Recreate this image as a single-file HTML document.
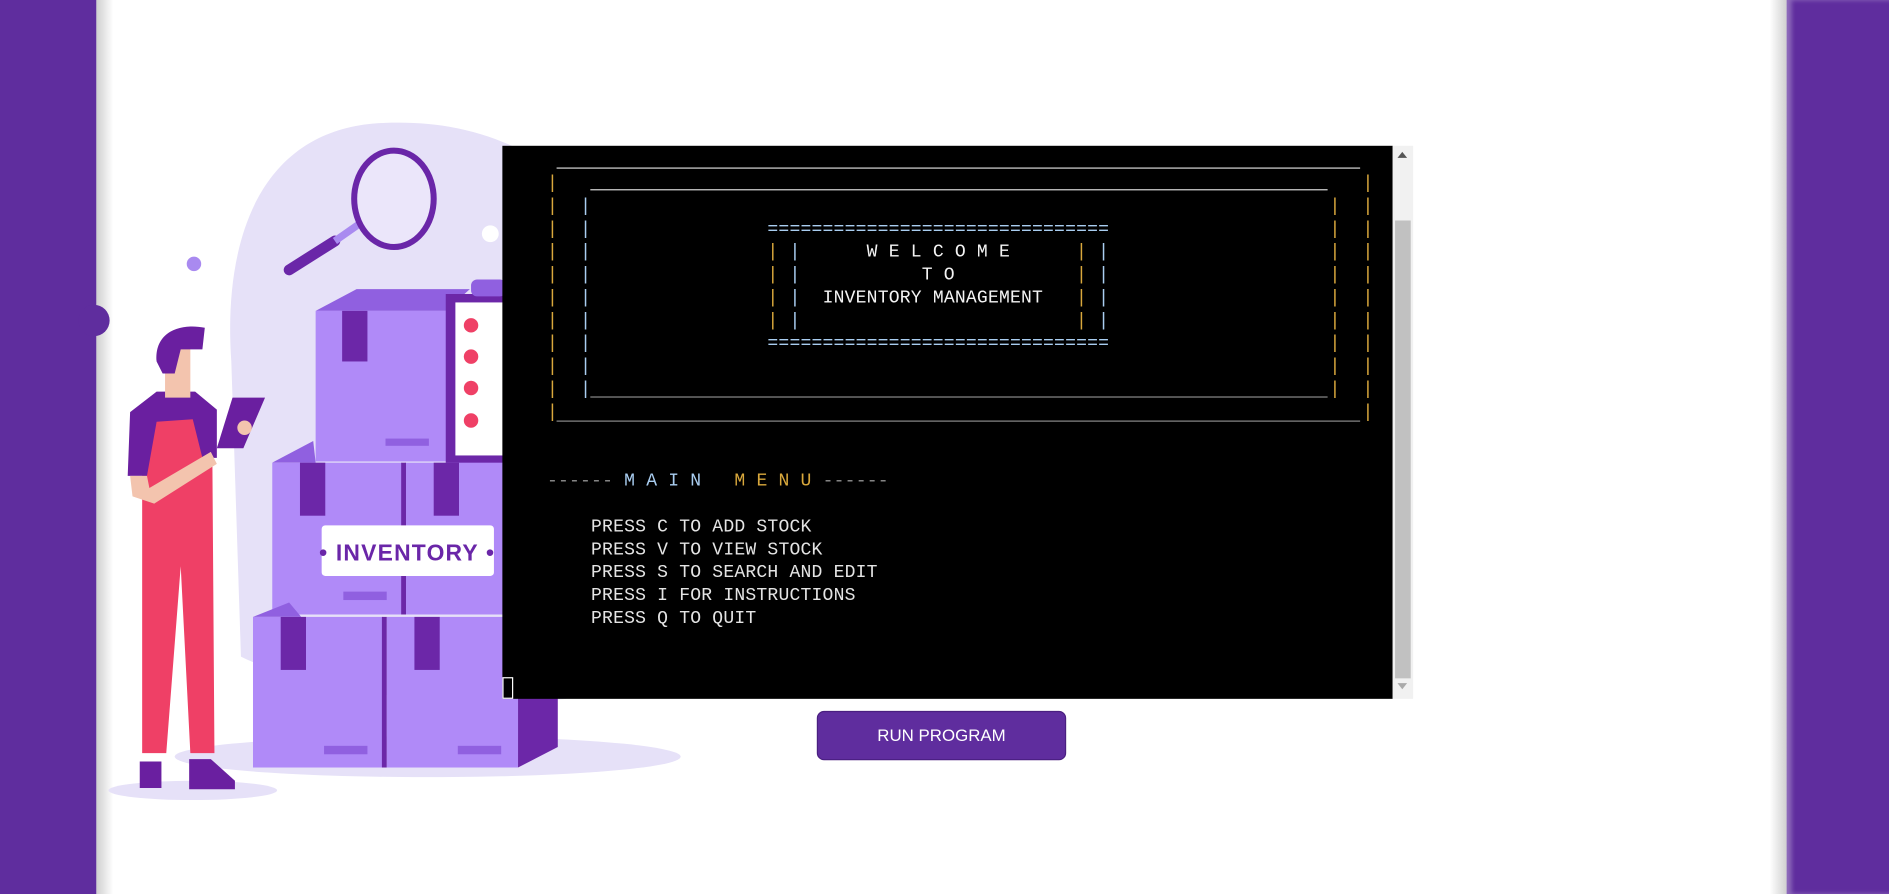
<!DOCTYPE html>
<html><head><meta charset="utf-8"><style>
html,body{margin:0;padding:0;width:1889px;height:894px;overflow:hidden;background:#fff}
#w{position:absolute;left:0;top:0;width:1568px;height:742px;transform:scale(1.20472,1.2049);transform-origin:0 0;background:#fff}
.band{position:absolute;top:0;height:742px;background:#5f2d9e}
#term{position:absolute;left:417px;top:121px;width:739px;height:459px;background:#000}
#sb{position:absolute;left:1156px;top:121px;width:17px;height:459px;background:#f1f1f1}
.t{position:absolute;margin:0;white-space:pre;font:15px/19px "Liberation Mono",monospace;letter-spacing:0.15px;color:#e4e4e4}
.y{color:#d9a83c}.b{color:#a9cdf0}.g{color:#8a8a8a}.w{color:#f4f4f4}
.ln{position:absolute;height:1px}
#btn{position:absolute;left:678px;top:590px;width:207px;height:41px;background:#5f2d9e;border:1px solid #4a1f80;border-radius:6px;color:#fff;font:14px "Liberation Sans",sans-serif;text-align:center;line-height:39px;box-sizing:border-box}
</style></head><body><div id="w">
<div class="band" style="left:0;width:80px"></div>
<div style="position:absolute;left:80px;top:0;width:14px;height:742px;background:linear-gradient(90deg,#cfcfcf,#fff)"></div>
<div style="position:absolute;left:65px;top:253px;width:26px;height:26px;border-radius:50%;background:#5f2d9e"></div>
<div style="position:absolute;left:1469px;top:0;width:14px;height:742px;background:linear-gradient(90deg,#fff,#d0d0d0)"></div>
<div class="band" style="left:1483px;width:85px;box-shadow:inset 4px 0 4px rgba(255,255,255,.3)"></div>

<svg style="position:absolute;left:0;top:0" width="1568" height="742">
<path d="M192 300 C185 200 215 105 320 102 C380 100 420 115 460 140 L470 580 C360 590 250 570 200 545 Z" fill="#e6e1f8"/>
<ellipse cx="355" cy="628" rx="210" ry="17" fill="#e6e1f8"/>
<ellipse cx="160" cy="656" rx="70" ry="8" fill="#e6e1f8"/>
<circle cx="161" cy="219" r="6" fill="#a98af0"/>
<circle cx="407" cy="194" r="7" fill="#fff"/>
<line x1="240" y1="224" x2="278" y2="200" stroke="#6a26a8" stroke-width="9" stroke-linecap="round"/>
<line x1="278" y1="200" x2="298" y2="186" stroke="#a98af0" stroke-width="6"/>
<ellipse cx="327" cy="165" rx="33" ry="40" fill="#ebe6fa" stroke="#6a26a8" stroke-width="5"/>
<polygon points="262,258 296,240 390,240 370,258" fill="#9060e0"/>
<rect x="262" y="258" width="110" height="125" fill="#b08af8"/>
<rect x="284" y="258" width="21" height="42" fill="#6c27a8"/>
<rect x="320" y="364" width="36" height="6" fill="#9060e0"/>
<rect x="370" y="244" width="50" height="141" fill="#6c27a8"/>
<rect x="378" y="251" width="42" height="127" fill="#fff"/>
<rect x="391" y="232" width="29" height="14" rx="5" fill="#9060e0"/>
<circle cx="391" cy="270" r="6" fill="#ef4066"/><circle cx="391" cy="296" r="6" fill="#ef4066"/>
<circle cx="391" cy="322" r="6" fill="#ef4066"/><circle cx="391" cy="349" r="6" fill="#ef4066"/>
<polygon points="226,384 260,366 262,384" fill="#9060e0"/>
<rect x="226" y="384" width="108" height="126" fill="#b08af8"/>
<rect x="336" y="384" width="90" height="126" fill="#b08af8"/>
<rect x="333" y="384" width="4" height="126" fill="#6c27a8"/>
<rect x="249" y="384" width="21" height="44" fill="#6c27a8"/>
<rect x="360" y="384" width="21" height="44" fill="#6c27a8"/>
<rect x="285" y="491" width="36" height="7" fill="#9060e0"/>
<rect x="267" y="436" width="143" height="42" rx="3" fill="#fff"/>
<text x="338" y="465" text-anchor="middle" font-family="Liberation Sans,sans-serif" font-weight="bold" font-size="19" letter-spacing="1" fill="#6a26a8">• INVENTORY •</text>
<polygon points="210,512 240,500 250,512" fill="#9060e0"/>
<rect x="210" y="512" width="108" height="125" fill="#b08af8"/>
<rect x="321" y="512" width="109" height="125" fill="#b08af8"/>
<rect x="317" y="512" width="4" height="125" fill="#6c27a8"/>
<polygon points="430,560 463,560 463,620 430,637" fill="#6c27a8"/>
<rect x="233" y="512" width="21" height="44" fill="#6c27a8"/>
<rect x="344" y="512" width="21" height="44" fill="#6c27a8"/>
<rect x="269" y="619" width="36" height="7" fill="#9060e0"/>
<rect x="380" y="619" width="36" height="7" fill="#9060e0"/>
<path d="M118 345 L176 340 L178 625 L158 625 L150 470 L138 625 L118 625 Z" fill="#ef4066"/>
<path d="M108 342 L130 325 L162 325 L180 340 L180 380 L168 380 L160 348 L130 350 L122 395 L106 395 Z" fill="#6a1fa0"/>
<path d="M108 395 L122 395 L124 405 L175 375 L180 385 L128 418 L110 412 Z" fill="#f3c4ae"/>
<path d="M137 288 L158 288 L158 330 L137 330 Z" fill="#f3c4ae"/>
<path d="M130 300 C128 275 150 268 170 272 L168 290 L150 290 L145 310 L135 310 Z" fill="#6a1fa0"/>
<polygon points="193,330 220,330 202,372 180,372" fill="#6a1fa0"/>
<circle cx="203" cy="355" r="6" fill="#f3c4ae"/>
<rect x="116" y="632" width="18" height="22" fill="#6a1fa0"/>
<path d="M157 630 L175 630 L195 648 L195 655 L157 655 Z" fill="#6a1fa0"/>
</svg>

<div id="term"></div>
<div id="sb"><div style="position:absolute;left:2px;top:62px;width:13px;height:380px;background:#c1c1c1"></div>
<div style="position:absolute;left:4px;top:5px;border:4px solid transparent;border-bottom:5px solid #555;border-top:0"></div>
<div style="position:absolute;left:4px;top:446px;border:4px solid transparent;border-top:5px solid #aaa;border-bottom:0"></div></div>
<div style="position:absolute;left:417px;top:562px;width:7px;height:16px;border:1px solid #fff"></div>

<div class="ln" style="left:462px;top:139px;width:667px;background:#d8d8d8"></div>
<div class="ln" style="left:490px;top:157px;width:612px;background:#d8d8d8"></div>
<div class="ln" style="left:490px;top:329px;width:612px;background:#8a8a8a"></div>
<div class="ln" style="left:462px;top:349px;width:667px;background:#8a8a8a"></div>

<div class="t y" style="left:454px;top:143px">|
|
|
|
|
|
|
|
|
|
|</div>
<div class="t y" style="left:1131px;top:143px">|
|
|
|
|
|
|
|
|
|
|</div>
<div class="t b" style="left:481.5px;top:162px">|
|
|
|
|
|
|
|
|</div>
<div class="t y" style="left:1103.6px;top:162px">|
|
|
|
|
|
|
|
|</div>
<div class="t b" style="left:637px;top:181px">===============================</div>
<div class="t b" style="left:637px;top:276px">===============================</div>
<div class="t" style="left:637px;top:200px"><span class="y">|</span> <span class="b">|</span>
<span class="y">|</span> <span class="b">|</span>
<span class="y">|</span> <span class="b">|</span>
<span class="y">|</span> <span class="b">|</span></div>
<div class="t" style="left:893.2px;top:200px"><span class="y">|</span> <span class="b">|</span>
<span class="y">|</span> <span class="b">|</span>
<span class="y">|</span> <span class="b">|</span>
<span class="y">|</span> <span class="b">|</span></div>
<div class="t w" style="left:719.4px;top:200px">W E L C O M E</div>
<div class="t w" style="left:765.1px;top:219px">T O</div>
<div class="t w" style="left:682.8px;top:238px">INVENTORY MANAGEMENT</div>

<div class="t" style="left:454px;top:390px"><span class="g">------</span> <span class="b">M A I N</span>   <span class="y">M E N U</span> <span class="g">------</span></div>
<div class="t" style="left:490.6px;top:428px">PRESS C TO ADD STOCK
PRESS V TO VIEW STOCK
PRESS S TO SEARCH AND EDIT
PRESS I FOR INSTRUCTIONS
PRESS Q TO QUIT</div>
<div id="btn">RUN PROGRAM</div>
</div></body></html>
